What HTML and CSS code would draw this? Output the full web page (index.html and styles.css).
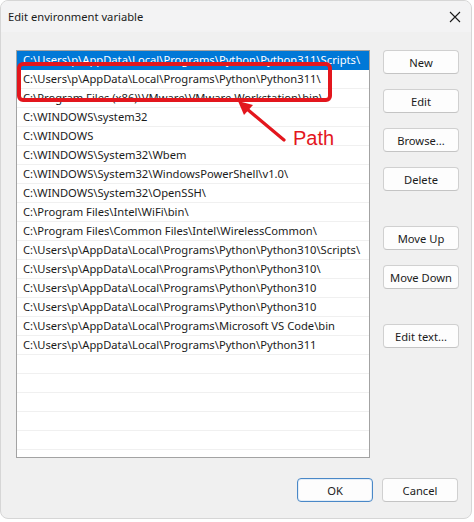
FILE: index.html
```html
<!DOCTYPE html>
<html>
<head>
<meta charset="utf-8">
<link rel="stylesheet" href="styles.css">
</head>
<body>
<div class="window">
  <div class="titlebar">
    <span class="title">Edit environment variable</span>
    <svg class="close" width="12" height="12" viewBox="0 0 12 12"><path d="M1 1 L11 11 M11 1 L1 11" stroke="#1a1a1a" stroke-width="1.1" fill="none"/></svg>
  </div>
  <div class="content">
    <div class="list">
      <div class="row selected">C:\Users\p\AppData\Local\Programs\Python\Python311\Scripts\</div>
      <div class="row">C:\Users\p\AppData\Local\Programs\Python\Python311\</div>
      <div class="row">C:\Program Files (x86)\VMware\VMware Workstation\bin\</div>
      <div class="row">C:\WINDOWS\system32</div>
      <div class="row">C:\WINDOWS</div>
      <div class="row">C:\WINDOWS\System32\Wbem</div>
      <div class="row">C:\WINDOWS\System32\WindowsPowerShell\v1.0\</div>
      <div class="row">C:\WINDOWS\System32\OpenSSH\</div>
      <div class="row">C:\Program Files\Intel\WiFi\bin\</div>
      <div class="row">C:\Program Files\Common Files\Intel\WirelessCommon\</div>
      <div class="row">C:\Users\p\AppData\Local\Programs\Python\Python310\Scripts\</div>
      <div class="row">C:\Users\p\AppData\Local\Programs\Python\Python310\</div>
      <div class="row">C:\Users\p\AppData\Local\Programs\Python\Python310</div>
      <div class="row">C:\Users\p\AppData\Local\Programs\Python\Python310</div>
      <div class="row">C:\Users\p\AppData\Local\Programs\Microsoft VS Code\bin</div>
      <div class="row">C:\Users\p\AppData\Local\Programs\Python\Python311</div>
      <div class="row"></div>
      <div class="row"></div>
      <div class="row"></div>
      <div class="row"></div>
      <div class="row"></div>
      <div class="row"></div>
    </div>
    <div class="side">
      <button class="btn">New</button>
      <button class="btn">Edit</button>
      <button class="btn">Browse...</button>
      <button class="btn">Delete</button>
      <button class="btn gap">Move Up</button>
      <button class="btn">Move Down</button>
      <button class="btn gap">Edit text...</button>
    </div>
  </div>
  <div class="footer">
    <button class="btn default">OK</button>
    <button class="btn">Cancel</button>
  </div>
  <div class="highlight"></div>
  <svg class="arrow" width="70" height="60" viewBox="0 0 70 60">
    <line x1="64" y1="50" x2="27" y2="19" stroke="#e3161d" stroke-width="3.2" stroke-linecap="round"/>
    <polygon points="18,11 33,15 24,25" fill="#e3161d"/>
  </svg>
  <span class="label">Path</span>
</div>
</body>
</html>
```
FILE: styles.css
```css
* { box-sizing: border-box; }
html, body { margin: 0; padding: 0; background: #ffffff; }
body {
  font-family: "Noto Sans", "Open Sans", sans-serif;
  font-size: 11.2px;
  color: #1b1b1b;
}
.window {
  position: relative;
  width: 472px;
  height: 519px;
  background: #f0f0f0;
  border: 1px solid #d6d6d6;
  border-radius: 8px;
  overflow: hidden;
}
.titlebar {
  height: 31px;
  background: #f3f3f4;
  display: flex;
  align-items: center;
  justify-content: space-between;
  padding: 0 10px 0 7px;
}
.title { font-size: 11.2px; color: #1b1b1b; }
.close { display: block; }
.content {
  display: flex;
  padding: 18px 0 0 15px;
  gap: 13px;
}
.list {
  width: 354px;
  height: 408px;
  background: #ffffff;
  border: 1px solid #a3a3a3;
  overflow: hidden;
}
.row {
  height: 19px;
  line-height: 18px;
  padding-left: 6px;
  border-bottom: 1px solid #f0f0f0;
  white-space: nowrap;
  overflow: hidden;
}
.row.selected {
  background: #0078d7;
  color: #ffffff;
  border-bottom-color: #0078d7;
}
.side {
  display: flex;
  flex-direction: column;
  gap: 15px;
}
.btn {
  width: 76px;
  height: 24px;
  font-family: inherit;
  font-size: 11.2px;
  color: #1b1b1b;
  background: #fdfdfd;
  border: 1px solid #d0d0d0;
  border-bottom-color: #c4c4c4;
  border-radius: 4px;
  padding: 0;
}
.side .gap { margin-top: 20px; }
.footer {
  display: flex;
  justify-content: flex-end;
  gap: 9px;
  padding: 20px 13px 0 0;
}
.btn.default {
  border: 1px solid #4a88c7;
  box-shadow: inset 0 0 0 1px #e3edf7;
}
.highlight {
  position: absolute;
  left: 16px;
  top: 61px;
  width: 315px;
  height: 40px;
  border: 4px solid #e3161d;
  border-radius: 6px;
}
.arrow {
  position: absolute;
  left: 219px;
  top: 89px;
}
.label {
  position: absolute;
  left: 292px;
  top: 126px;
  font-family: "Liberation Sans", Arial, sans-serif;
  font-size: 20px;
  color: #e3161d;
}
```
